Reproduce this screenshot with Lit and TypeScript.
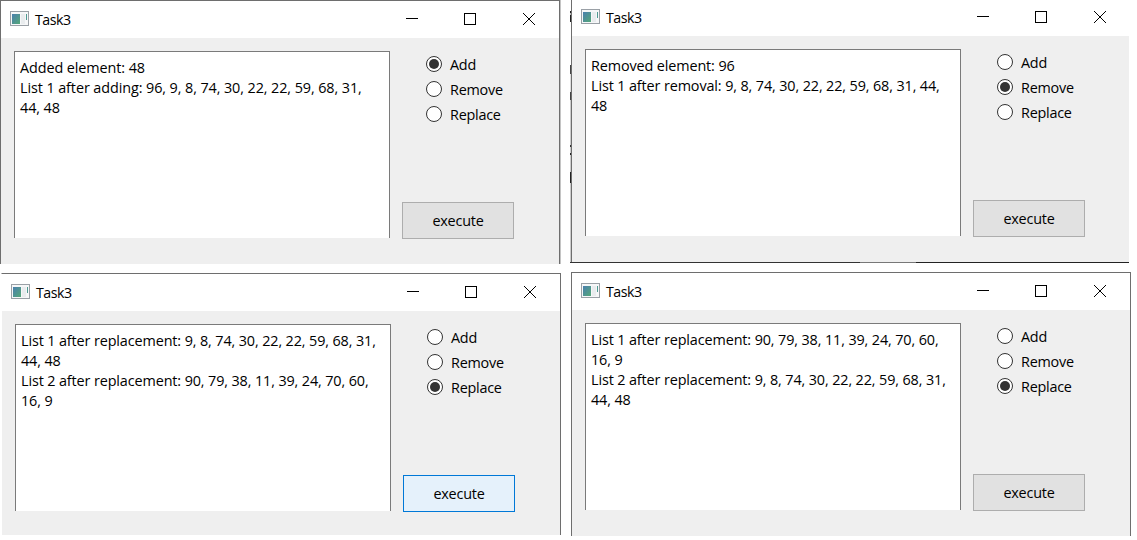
import { LitElement, html, css } from "lit";
import { customElement, property } from "lit/decorators.js";
import { classMap } from "lit/directives/class-map.js";

const OPTIONS = ["Add", "Remove", "Replace"];

@customElement("task-window")
class TaskWindow extends LitElement {
  @property({ attribute: false }) lines: string[] = [];
  @property() selected = "Add";
  @property({ type: Boolean }) hot = false;

  static styles = css`
    :host {
      display: flex;
      flex: none;
      flex-direction: column;
      box-sizing: border-box;
      width: 560px;
      border: 1px solid #6e6e6e;
      border-bottom: none;
      background: #efefef;
      overflow: hidden;
      font: 14.4px/20px "Open Sans", "Noto Sans", sans-serif;
      letter-spacing: -0.12px;
      color: #000;
    }
    .title {
      display: flex;
      flex: none;
      height: 37px;
      background: #fff;
      align-items: flex-start;
    }
    .app { margin: 10px 0 0 9px; flex: none; }
    .name { margin: 9px auto 0 5px; font-size: 14.2px; letter-spacing: -0.45px; }
    .ctl { flex: none; margin: 12px 0 0 46px; }
    .ctl:last-child { margin-right: 24px; margin-left: 47px; }
    .body { display: flex; align-items: flex-start; padding: 13px 0 0 13px; }
    .output {
      box-sizing: border-box;
      width: 376px;
      height: 187px;
      margin-right: 12px;
      border: 1px solid #7a7a7a;
      border-bottom: none;
      background: #fff;
      padding: 6px 0 0 5px;
      white-space: nowrap;
    }
    .line { height: 20px; }
    .side { display: flex; flex-direction: column; justify-content: space-between; height: 188px; }
    .options { padding: 1px 0 0 24px; }
    .option { display: flex; height: 25px; align-items: flex-start; }
    .option svg { margin: 4px 8px 0 0; }
    .option span { margin-top: 3px; letter-spacing: -0.25px; }
    .exec {
      box-sizing: border-box;
      width: 112px;
      height: 37px;
      padding: 0;
      border: 1px solid #adadad;
      background: #e1e1e1;
      font: inherit;
      letter-spacing: -0.2px;
      color: inherit;
      text-align: center;
    }
    .exec.hot { border-color: #0078d7; background: #e5f1fb; }
  `;

  render() {
    return html`
      <div class="title">
        <svg class="app" width="20" height="16" viewBox="0 0 20 16">
          <defs>
            <linearGradient id="g" x1="0" y1="0" x2="1" y2="1">
              <stop offset="0" stop-color="#4a7fae" />
              <stop offset="1" stop-color="#55a878" />
            </linearGradient>
          </defs>
          <rect x="0.5" y="0.5" width="18" height="14" fill="#f6f7f8" stroke="#9aa0a6" />
          <rect x="2" y="3" width="8" height="10" fill="url(#g)" />
          <rect x="11" y="3" width="4" height="10" fill="#e9ecee" />
          <rect x="16" y="3" width="1" height="6" fill="#4f9a92" />
        </svg>
        <span class="name">Task3</span>
        <svg class="ctl" width="12" height="12"><path d="M0 5.5H12" stroke="#000" /></svg>
        <svg class="ctl" width="12" height="12">
          <rect x="0.5" y="0.5" width="11" height="11" fill="none" stroke="#000" />
        </svg>
        <svg class="ctl" width="12" height="12"><path d="M0 0L12 12M12 0L0 12" stroke="#000" /></svg>
      </div>
      <div class="body">
        <div class="output">${this.lines.map((l) => html`<div class="line">${l}</div>`)}</div>
        <div class="side">
          <div class="options">
            ${OPTIONS.map(
              (o) => html`<div class="option">
                <svg width="16" height="16">
                  <circle cx="8" cy="8" r="7.5" fill="#fff" stroke="#333" />
                  <circle cx="8" cy="8" r=${o === this.selected ? 5 : 0} fill="#333" />
                </svg>
                <span>${o}</span>
              </div>`
            )}
          </div>
          <button class=${classMap({ exec: true, hot: this.hot })}>execute</button>
        </div>
      </div>
    `;
  }
}

@customElement("app-root")
class AppRoot extends LitElement {
  static styles = css`
    :host { display: block; width: 1137px; height: 540px; background: #fff; overflow: hidden; }
    .board { display: grid; grid-template-columns: 570px 567px; }
    .column { display: flex; flex-direction: column; height: 540px; overflow: hidden; }
    .cell { display: flex; flex: none; overflow: hidden; }
    .edge { flex: none; width: 1px; }
    .shadow { background: #c4c4c4; }
    .upper-left { height: 264px; }
    .upper-left task-window { letter-spacing: -0.09px; }
    .lower-left { height: 262px; margin-top: 9px; padding-left: 1px; }
    .lower-left task-window { border-left-color: #fff; }
    .upper-right { width: 559px; height: 262px; align-items: flex-start; }
    .upper-right task-window { margin-top: -2px; height: 264px; }
    .behind {
      height: 262px;
      background: linear-gradient(
        #fff 11px, #222 11px 13px, #bbb 13px 15px, #222 15px 22px, #fff 22px 65px, #444 65px 74px, #ddd 74px 92px,
        #444 92px 100px, #ccc 100px 145px, #333 145px 147px, #ccc 147px 153px, #222 153px 155px,
        #ccc 155px 172px, #222 172px 183px, #ccc 183px
      );
    }
    .floor {
      height: 1px;
      width: 559px;
      background: linear-gradient(90deg, #333 290px, #777 290px 346px, #222 346px);
    }
    .lower-right { height: 264px; margin-top: 9px; padding-left: 1px; }
  `;

  render() {
    return html`
      <div class="board">
        <div class="column">
          <div class="cell upper-left">
            <task-window
              .lines=${["Added element: 48", "List 1 after adding: 96, 9, 8, 74, 30, 22, 22, 59, 68, 31,", "44, 48"]}
              selected="Add"
            ></task-window>
            <div class="edge shadow"></div>
          </div>
          <div class="cell lower-left">
            <task-window
              .lines=${[
                "List 1 after replacement: 9, 8, 74, 30, 22, 22, 59, 68, 31,",
                "44, 48",
                "List 2 after replacement: 90, 79, 38, 11, 39, 24, 70, 60,",
                "16, 9",
              ]}
              selected="Replace"
              hot
            ></task-window>
          </div>
        </div>
        <div class="column">
          <div class="cell upper-right">
            <div class="edge behind"></div>
            <task-window
              .lines=${["Removed element: 96", "List 1 after removal: 9, 8, 74, 30, 22, 22, 59, 68, 31, 44,", "48"]}
              selected="Remove"
            ></task-window>
          </div>
          <div class="floor"></div>
          <div class="cell lower-right">
            <task-window
              .lines=${[
                "List 1 after replacement: 90, 79, 38, 11, 39, 24, 70, 60,",
                "16, 9",
                "List 2 after replacement: 9, 8, 74, 30, 22, 22, 59, 68, 31,",
                "44, 48",
              ]}
              selected="Replace"
            ></task-window>
          </div>
        </div>
      </div>
    `;
  }
}
